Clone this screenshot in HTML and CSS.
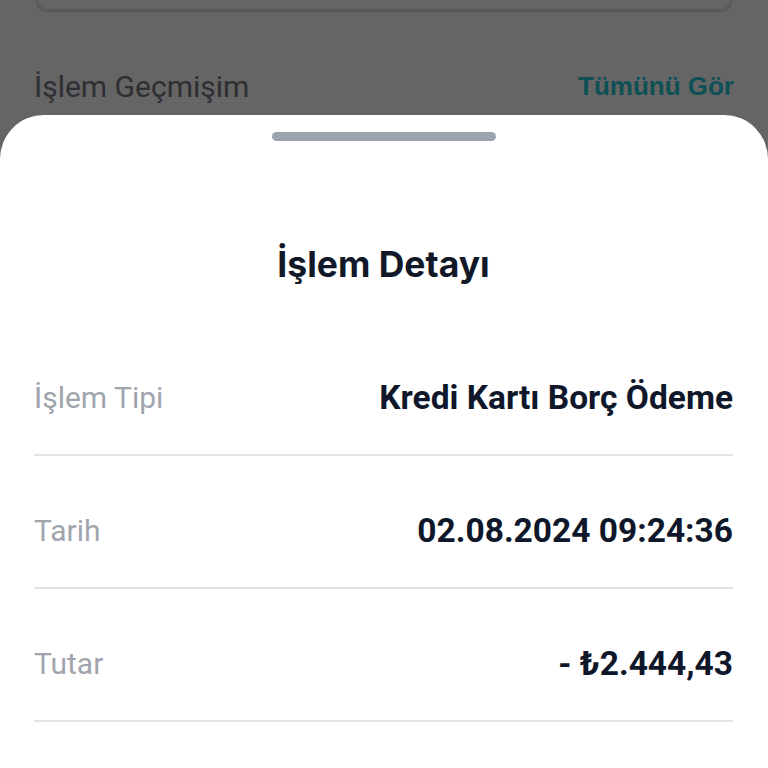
FILE: index.html
```html
<!DOCTYPE html>
<html>
<head>
    <title>İşlem Detayı</title>
    <meta charset="utf-8">
    <link rel="stylesheet" href="styles.css">
</head>
<body>
    <div class="backdrop">
        <div class="card-stub"></div>
        <div class="section-head">
            <span class="section-title">İşlem Geçmişim</span>
            <span class="section-link">Tümünü Gör</span>
        </div>
    </div>

    <div class="sheet">
        <div class="handle"></div>
        <h1 class="sheet-title">İşlem Detayı</h1>
        <div class="detail-row">
            <span class="detail-label">İşlem Tipi</span>
            <span class="detail-value">Kredi Kartı Borç Ödeme</span>
        </div>
        <div class="detail-row">
            <span class="detail-label">Tarih</span>
            <span class="detail-value">02.08.2024 09:24:36</span>
        </div>
        <div class="detail-row">
            <span class="detail-label">Tutar</span>
            <span class="detail-value">- ₺2.444,43</span>
        </div>
    </div>
</body>
</html>
```

FILE: styles.css
```css
body {
    margin: 0;
    background-color: #656565;
    font-family: Roboto, "Noto Sans", sans-serif;
    height: 768px;
    overflow: hidden;
}
.backdrop {
    height: 115px;
}
.card-stub {
    margin: 0 36px;
    height: 9px;
    border: 2px solid #595959;
    border-top: none;
    border-radius: 0 0 20px 20px;
    box-shadow: 0 1px 2px rgba(0, 0, 0, 0.15);
}
.section-head {
    display: flex;
    justify-content: space-between;
    align-items: center;
    margin-top: 59px;
    padding: 0 34px 0 34px;
    line-height: 33px;
}
.section-title {
    font-size: 30px;
    color: #2e2f33;
}
.section-link {
    font-family: "Liberation Sans", Arial, sans-serif;
    font-weight: bold;
    font-size: 26px;
    color: #0e5055;
}
.sheet {
    box-sizing: border-box;
    background-color: #fff;
    border-radius: 44px 44px 0 0;
    padding: 17px 35px 0 34px;
    height: 653px;
}
.handle {
    width: 224px;
    height: 9px;
    margin: 0 auto;
    border-radius: 5px;
    background-color: #9ba3ae;
}
.sheet-title {
    margin: 104px 0 38px 0;
    text-align: center;
    font-family: Inter, "Noto Sans", sans-serif;
    font-weight: bold;
    font-size: 35.5px;
    line-height: 40px;
    color: #111827;
}
.detail-row {
    display: flex;
    justify-content: space-between;
    align-items: center;
    padding: 58px 0 39px 0;
    line-height: 34px;
    border-bottom: 2px solid #e3e3e3;
}
.detail-label {
    font-size: 30px;
    color: #a0a5ad;
}
.detail-value {
    font-size: 33.5px;
    font-weight: bold;
    color: #0f172a;
}
```
